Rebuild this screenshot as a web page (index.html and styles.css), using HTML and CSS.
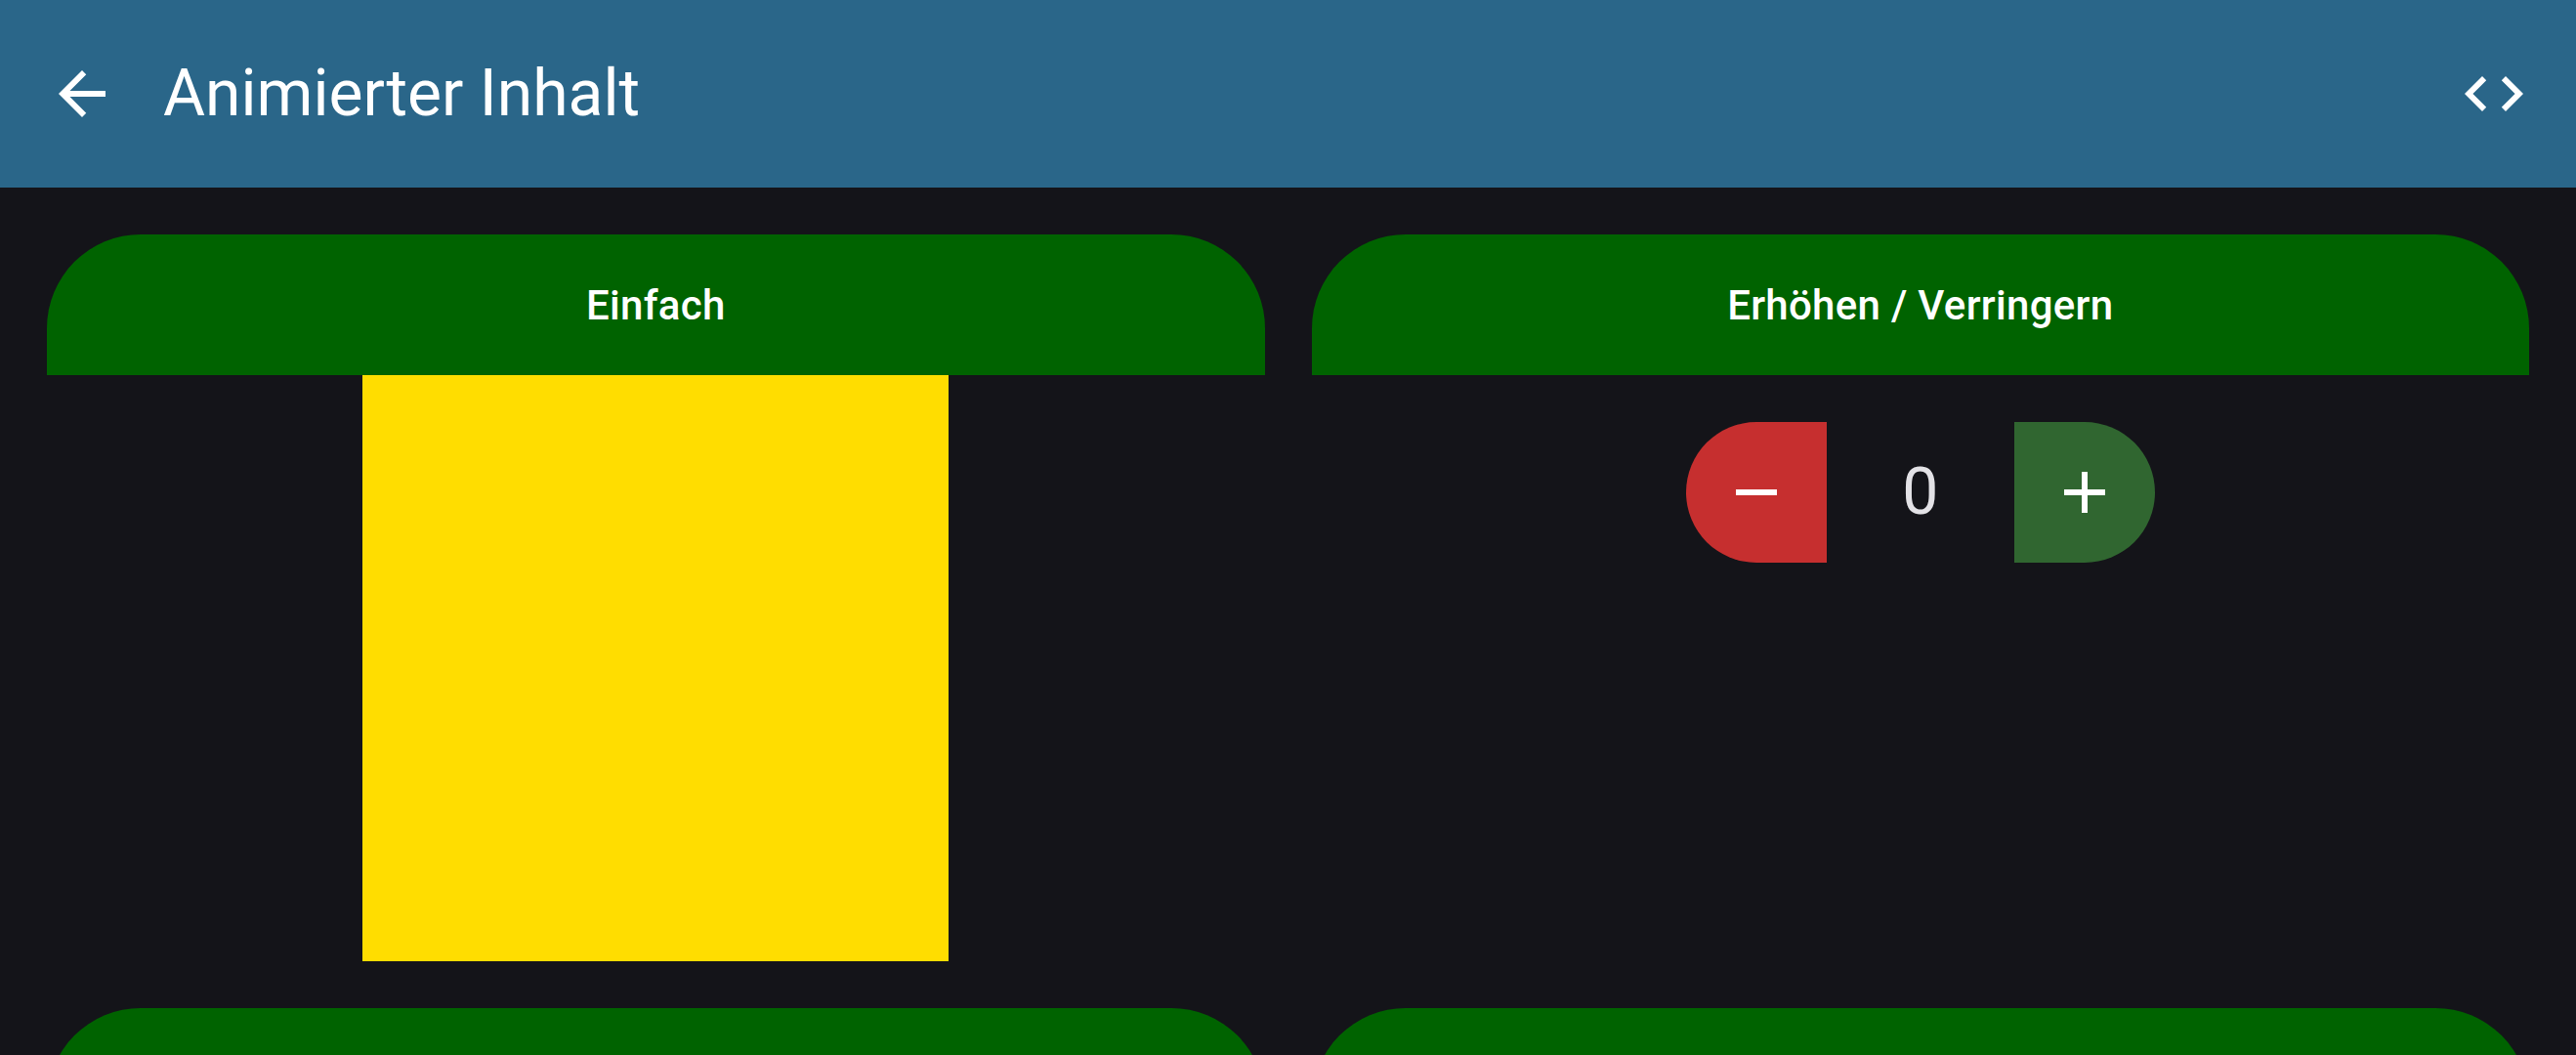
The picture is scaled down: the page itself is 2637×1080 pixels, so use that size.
FILE: index.html
```html
<!DOCTYPE html>
<html lang="de">
<head>
<meta charset="utf-8">
<title>Animierter Inhalt</title>
<link rel="stylesheet" href="styles.css">
</head>
<body>
<header class="appbar">
  <button class="icon-btn" aria-label="Zurück">
    <svg viewBox="0 0 24 24" width="72" height="72"><path fill="#fff" d="M20 11H7.83l5.59-5.59L12 4l-8 8 8 8 1.41-1.41L7.83 13H20v-2z"/></svg>
  </button>
  <h1 class="title">Animierter Inhalt</h1>
  <button class="icon-btn" aria-label="Code">
    <svg viewBox="0 0 24 24" width="72" height="72"><path fill="#fff" d="M9.4 16.6L4.8 12l4.6-4.6L8 6l-6 6 6 6 1.4-1.4zm5.2 0l4.6-4.6-4.6-4.6L16 6l6 6-6 6-1.4-1.4z"/></svg>
  </button>
</header>
<main class="grid">
  <section class="card">
    <div class="card-head">Einfach</div>
    <div class="card-body">
      <div class="square"></div>
    </div>
  </section>
  <section class="card">
    <div class="card-head">Erhöhen / Verringern</div>
    <div class="card-body">
      <div class="counter">
        <button class="cbtn minus" aria-label="Verringern">
          <svg viewBox="0 0 24 24" width="72" height="72"><path fill="#fff" d="M19 13H5v-2h14v2z"/></svg>
        </button>
        <span class="count">0</span>
        <button class="cbtn plus" aria-label="Erhöhen">
          <svg viewBox="0 0 24 24" width="72" height="72"><path fill="#fff" d="M19 13h-6v6h-2v-6H5v-2h6V5h2v6h6v2z"/></svg>
        </button>
      </div>
    </div>
  </section>
  <section class="card">
    <div class="card-head"></div>
    <div class="card-body"></div>
  </section>
  <section class="card">
    <div class="card-head"></div>
    <div class="card-body"></div>
  </section>
</main>
</body>
</html>
```
FILE: styles.css
```css
html, body {
  margin: 0;
  padding: 0;
  background: #141419;
  font-family: Roboto, "Noto Sans", sans-serif;
  overflow: hidden;
}

.appbar {
  height: 192px;
  background: #2a6689;
  display: flex;
  align-items: center;
  padding: 0 48px;
  box-sizing: border-box;
}

.icon-btn {
  width: 72px;
  height: 72px;
  padding: 0;
  border: 0;
  background: none;
  display: flex;
}

.title {
  flex: 1;
  margin: 0 0 0 47px;
  color: #fff;
  font-size: 66px;
  font-weight: 400;
  line-height: 1;
}

.grid {
  display: grid;
  grid-template-columns: 1fr 1fr;
  gap: 48px;
  padding: 48px;
}

.card {
  display: flex;
  flex-direction: column;
}

.card-head {
  height: 144px;
  background: #006300;
  border-radius: 96px 96px 0 0;
  display: flex;
  align-items: center;
  justify-content: center;
  color: #fff;
  font-size: 42px;
  font-weight: 500;
  letter-spacing: 0.3px;
}

.card-body {
  display: flex;
  flex-direction: column;
  align-items: center;
}

.square {
  width: 600px;
  height: 600px;
  background: #ffdd00;
}

.counter {
  margin-top: 48px;
  display: flex;
  align-items: center;
}

.cbtn {
  width: 144px;
  height: 144px;
  border: 0;
  padding: 0;
  display: flex;
  align-items: center;
  justify-content: center;
}

.minus {
  background: #c62f2f;
  border-radius: 72px 0 0 72px;
}

.plus {
  background: #306630;
  border-radius: 0 72px 72px 0;
}

.count {
  width: 192px;
  text-align: center;
  color: #e3e2e6;
  font-size: 66px;
  line-height: 1;
}
```
